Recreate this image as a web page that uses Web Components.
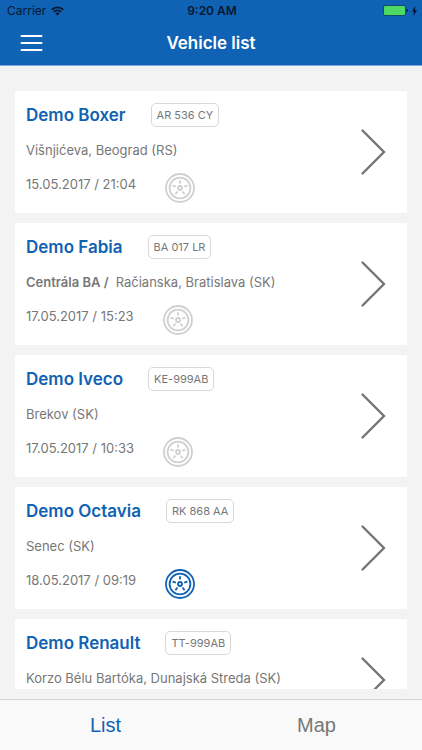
<!DOCTYPE html>
<html lang="en">
<head>
<meta charset="utf-8">
<meta name="viewport" content="width=device-width, initial-scale=1">
<title>Vehicle list</title>
<style>
  body {
    margin: 0;
    font-family: Inter, 'Liberation Sans', sans-serif;
    background: #f3f3f3;
  }
</style>
</head>
<body>

<fleet-app>
  <status-bar slot="top" carrier="Carrier" time="9:20 AM"></status-bar>
  <nav-header slot="top">Vehicle list</nav-header>

  <vehicle-card name="Demo Boxer" plate="AR 536 CY" date="15.05.2017 / 21:04">Višnjićeva, Beograd (RS)</vehicle-card>
  <vehicle-card name="Demo Fabia" plate="BA 017 LR" date="17.05.2017 / 15:23"><b slot="place">Centrála BA /</b>Račianska, Bratislava (SK)</vehicle-card>
  <vehicle-card name="Demo Iveco" plate="KE-999AB" date="17.05.2017 / 10:33">Brekov (SK)</vehicle-card>
  <vehicle-card name="Demo Octavia" plate="RK 868 AA" date="18.05.2017 / 09:19" active>Senec (SK)</vehicle-card>
  <vehicle-card name="Demo Renault" plate="TT-999AB">Korzo Bélu Bartóka, Dunajská Streda (SK)</vehicle-card>

  <tab-bar slot="bottom"></tab-bar>
</fleet-app>

<script>
class FleetApp extends HTMLElement {
  connectedCallback() {
    const shadow = this.attachShadow({ mode: 'open' });
    shadow.innerHTML = `
      <style>
        :host {
          --blue: #1062b4;
          --grey: #777;
          display: flex;
          flex-direction: column;
          height: 100vh;
        }
        main {
          flex: 1;
          min-height: 0;
          margin: 25px 15px 10px;
          display: flex;
          flex-direction: column;
          gap: 10px;
          overflow-y: auto;
          scrollbar-width: none;
        }
      </style>
      <slot name="top"></slot>
      <main><slot></slot></main>
      <slot name="bottom"></slot>
    `;
  }
}

class StatusBar extends HTMLElement {
  connectedCallback() {
    const shadow = this.attachShadow({ mode: 'open' });
    shadow.innerHTML = `
      <style>
        :host {
          display: grid;
          grid-template-columns: 1fr auto 1fr;
          align-items: center;
          height: 21px;
          padding: 0 5px 0 7px;
          background: var(--blue);
          color: #06182f;
          font-size: 12px;
        }
        .left, .right {
          display: flex;
          align-items: center;
          gap: 5px;
        }
        .right { justify-content: flex-end; gap: 4px; }
        .time { font-weight: 600; }
        svg { display: block; }
      </style>
      <div class="left">
        <span>${this.getAttribute('carrier')}</span>
        <svg width="13" height="10" viewBox="0 0 13 10" fill="none" stroke="currentColor" stroke-width="1.7">
          <path d="M.7 3.7a8.3 8.3 0 0 1 11.6 0M2.8 5.9a5.3 5.3 0 0 1 7.4 0"/>
          <path d="M6.5 9.6 4.4 7.5a3 3 0 0 1 4.2 0z" fill="currentColor" stroke="none"/>
        </svg>
      </div>
      <span class="time">${this.getAttribute('time')}</span>
      <div class="right">
        <svg width="25" height="11" viewBox="0 0 25 11">
          <rect x=".5" y=".5" width="22" height="10" rx="1.5" fill="#4cd964" stroke="#164b67"/>
          <path d="M23.5 3.8q1.5.3 1.5 1.7t-1.5 1.7z" fill="#06182f"/>
        </svg>
        <svg width="5" height="10" viewBox="0 0 5 10">
          <path d="M3.4 0 0 5.5h2L1.4 10 5 4.2H2.9z" fill="#06182f"/>
        </svg>
      </div>
    `;
  }
}

class NavHeader extends HTMLElement {
  connectedCallback() {
    const shadow = this.attachShadow({ mode: 'open' });
    shadow.innerHTML = `
      <style>
        :host {
          display: grid;
          grid-template-columns: 44px 1fr 44px;
          align-items: center;
          height: 44px;
          padding: 0 10px;
          background: var(--blue);
          border-bottom: 1px solid #7fa8d6;
          color: #fff;
        }
        button {
          display: flex;
          padding: 10px;
          border: 0;
          background: none;
          color: inherit;
        }
        h1 {
          margin: 0;
          text-align: center;
          font-size: 17px;
          font-weight: 600;
          line-height: 24px;
        }
      </style>
      <button type="button" aria-label="Menu">
        <svg width="23" height="18" viewBox="0 0 23 18" stroke="currentColor" stroke-width="2" stroke-linecap="round">
          <path d="M1.5 2h20M1.5 9h20M1.5 16h20"/>
        </svg>
      </button>
      <h1><slot></slot></h1>
    `;
  }
}

class WheelIcon extends HTMLElement {
  connectedCallback() {
    const shadow = this.attachShadow({ mode: 'open' });
    // five short spokes round the hub, the first one pointing up
    const spokes = [0, 72, 144, 216, 288]
      .map(a => `<path d="M15 7.2v3.4" transform="rotate(${a} 15 15)"/>`)
      .join('');
    shadow.innerHTML = `
      <style>
        :host { display: block; }
        svg { display: block; }
      </style>
      <svg width="30" height="30" viewBox="0 0 30 30" fill="none" stroke="currentColor" stroke-width="1.8">
        <circle cx="15" cy="15" r="14"/>
        <circle cx="15" cy="15" r="10.4"/>
        <circle cx="15" cy="15" r="2"/>
        ${spokes}
      </svg>
    `;
  }
}

class VehicleCard extends HTMLElement {
  connectedCallback() {
    const name  = this.getAttribute('name');
    const plate = this.getAttribute('plate');
    const date  = this.getAttribute('date');

    // a vehicle with no date yet keeps the height of the others
    const last = date
      ? `<div class="last"><time>${date}</time><wheel-icon></wheel-icon></div>`
      : '';

    const shadow = this.attachShadow({ mode: 'open' });
    shadow.innerHTML = `
      <style>
        :host {
          display: flex;
          flex-shrink: 0;
          align-items: flex-start;
          justify-content: space-between;
          min-height: 100px;
          padding: 12px 15px 10px 11px;
          background: #fff;
          color: var(--grey);
          font-size: 13px;
          line-height: 22px;
        }
        .info {
          display: flex;
          flex-direction: column;
          gap: 12px;
          min-width: 0;
        }
        .head {
          display: flex;
          align-items: center;
          gap: 25px;
        }
        h2 {
          margin: 0;
          color: var(--blue);
          font-size: 17px;
          font-weight: 600;
          line-height: 24px;
        }
        .plate {
          padding: 0 5px;
          border: 1px solid #d9d9d9;
          border-radius: 5px;
          font-size: 11px;
        }
        .place {
          display: flex;
          gap: 7px;
        }
        ::slotted(b) { font-weight: 600; }
        .last {
          display: flex;
          align-items: flex-start;
          gap: 29px;
        }
        wheel-icon { color: #d0d0d0; }
        :host([active]) wheel-icon { color: var(--blue); }
        a {
          align-self: center;
          padding: 0 6px 2px;
          color: #737373;
        }
        a svg { display: block; }
      </style>
      <div class="info">
        <div class="head">
          <h2>${name}</h2>
          <span class="plate">${plate}</span>
        </div>
        <div class="place"><slot name="place"></slot><span><slot></slot></span></div>
        ${last}
      </div>
      <a href="#" aria-label="Open ${name}">
        <svg width="26" height="46" viewBox="0 0 26 46" fill="none" stroke="currentColor" stroke-width="2.3" stroke-linecap="round">
          <path d="M2.5 1.5 24 23 2.5 44.5"/>
        </svg>
      </a>
    `;
  }
}

class TabBar extends HTMLElement {
  connectedCallback() {
    const shadow = this.attachShadow({ mode: 'open' });
    shadow.innerHTML = `
      <style>
        :host {
          display: block;
          background: #f9f9f9;
          border-top: 1px solid #d2d2d2;
        }
        nav { display: flex; }
        a {
          flex: 1;
          color: var(--grey);
          font-family: 'Liberation Sans', Arial, sans-serif;
          font-size: 20px;
          line-height: 50px;
          text-align: center;
          text-decoration: none;
        }
        a[aria-current] { color: var(--blue); }
      </style>
      <nav>
        <a href="#list" aria-current="page">List</a>
        <a href="#map">Map</a>
      </nav>
    `;
  }
}

customElements.define('fleet-app', FleetApp);
customElements.define('status-bar', StatusBar);
customElements.define('nav-header', NavHeader);
customElements.define('wheel-icon', WheelIcon);
customElements.define('vehicle-card', VehicleCard);
customElements.define('tab-bar', TabBar);
</script>
</body>
</html>
